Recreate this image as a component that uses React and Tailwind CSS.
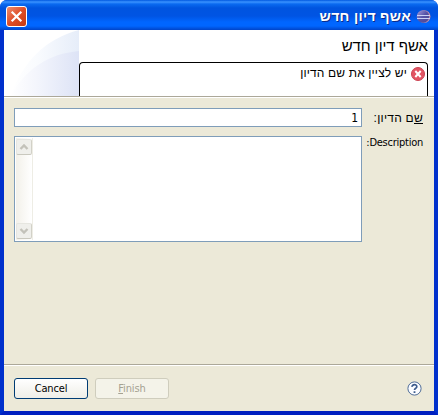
function GlobeIcon() {
  return (
    <svg className="h-[15px] w-[15px] shrink-0" viewBox="0 0 15 15">
      <defs>
        <linearGradient id="globe" x1="0" y1="0" x2="1" y2="1">
          <stop offset="0" stopColor="#a9a0e0" />
          <stop offset=".5" stopColor="#5552a6" />
          <stop offset="1" stopColor="#4d4794" />
        </linearGradient>
      </defs>
      <circle cx="8.2" cy="7.5" r="6.3" fill="#c98fa4" />
      <circle cx="7" cy="7.5" r="6.2" fill="url(#globe)" />
      <path d="M1 6.5H14M1 9.5H14" stroke="#ccd2f6" strokeWidth="1" />
    </svg>
  );
}

function CloseButton() {
  return (
    <button className="flex h-[21px] w-[21px] items-center justify-center rounded-[3px] border border-white bg-linear-to-br from-[#ee8c6c] via-[#de4d26] to-[#c63a10]">
      <svg className="h-[13px] w-[13px]" viewBox="0 0 13 13">
        <path d="M1.7 1.7L11.3 11.3M11.3 1.7L1.7 11.3" stroke="#fff" strokeWidth="2.2" />
      </svg>
    </button>
  );
}

function BannerArt() {
  return (
    <svg className="h-[66px] w-[75px] shrink-0" viewBox="0 0 75 66">
      <defs>
        <linearGradient id="outer" x1="0" x2="1">
          <stop offset="0" stopColor="#fff" />
          <stop offset=".4" stopColor="#f9fbfe" />
          <stop offset="1" stopColor="#e6edf9" />
        </linearGradient>
        <linearGradient id="inner" x1="0" x2="1">
          <stop offset="0" stopColor="#fff" />
          <stop offset=".4" stopColor="#f3f5fc" />
          <stop offset="1" stopColor="#dde3f6" />
        </linearGradient>
      </defs>
      <path d="M6 66C20 31 41 9 75 0V66Z" fill="url(#outer)" />
      <path d="M6 66C23 38 44 24 75 21V66Z" fill="url(#inner)" />
    </svg>
  );
}

function ErrorIcon() {
  return (
    <svg className="h-[14px] w-[14px] shrink-0" viewBox="0 0 14 14">
      <circle cx="7" cy="7" r="6.5" fill="#e25563" stroke="#cc4352" />
      <path d="M4.3 4L9.7 10M9.7 4L4.3 10" stroke="#fff" strokeWidth="2" />
    </svg>
  );
}

function ScrollButton({ down }) {
  return (
    <div className="flex h-[16px] w-[16px] items-center justify-center rounded-[2px] border border-[#e6e6e0] border-r-[#d2d1c8] border-b-[#c9c8be] bg-[#efefeb]">
      <svg className="h-[8px] w-[10px]" viewBox="0 0 10 8">
        <path d={down ? "M1.5 2L5 5.5L8.5 2" : "M1.5 6L5 2.5L8.5 6"} fill="none" stroke="#c3c2ba" strokeWidth="2.4" />
      </svg>
    </div>
  );
}

function HelpIcon() {
  return (
    <svg className="h-[15px] w-[15px]" viewBox="0 0 15 15">
      <circle cx="7.5" cy="7.5" r="6.6" fill="#fbfcff" stroke="#506d98" />
      <path d="M5.1 5.9C5 3 9.9 3 9.8 5.7C9.7 7.3 7.5 7.2 7.5 9" fill="none" stroke="#3d5c8d" strokeWidth="1.7" />
      <path d="M6.6 10.2H8.4V12H6.6Z" fill="#3d5c8d" />
    </svg>
  );
}

export default function App() {
  return (
    <div className="h-[415px] w-[439px] overflow-hidden bg-white font-['DejaVu_Sans_Condensed','DejaVu_Sans',sans-serif] text-[11px] text-black">
      <div className="flex h-[415px] w-[438px] flex-col overflow-hidden rounded-t-[7px] bg-[#0036d8]">
        <header className="flex h-[30px] shrink-0 items-center justify-between bg-[linear-gradient(180deg,#0058e0_0px,#3a93ff_2px,#0a6af0_4px,#0054df_8px,#0054e3_16px,#0066ff_22px,#0066ff_26px,#0044c8_30px)] pt-[2px] pr-[7px] pl-[6px]">
          <CloseButton />
          <div className="flex items-center gap-[5px]">
            <h1 dir="rtl" className="font-['Liberation_Sans',sans-serif] text-[14px] leading-[16px] font-bold tracking-[0.3px] whitespace-nowrap text-white [text-shadow:1px_1px_0_#0a2c8c]">אשף דיון חדש</h1>
            <GlobeIcon />
          </div>
        </header>
        <main className="flex min-h-0 grow flex-col border-x-4 border-b-4 border-r-[#0030cc] border-b-[#0020c0] border-l-[#0030cc] bg-[#ece9d8]">
          <section className="flex h-[66px] shrink-0 bg-white">
            <BannerArt />
            <div className="flex grow flex-col pr-[6px]">
              <h2 dir="rtl" className="h-[32px] pt-[7px] font-['Liberation_Sans',sans-serif] text-[15px] leading-[18px] tracking-[-0.05px] whitespace-nowrap">אשף דיון חדש</h2>
              <div dir="rtl" className="flex h-[34px] items-start gap-[4px] rounded-t-[4px] border border-b-0 border-black pt-[4px] pr-[2px]">
                <ErrorIcon />
                <p className="-mt-px font-['Liberation_Sans',sans-serif] text-[12px] leading-[14px] tracking-[0.15px] whitespace-nowrap">יש לציין את שם הדיון</p>
              </div>
            </div>
          </section>
          <div className="h-[2px] shrink-0 border-t border-b border-t-[#aca899] border-b-white" />
          <form className="grid grow grid-cols-[348px_1fr] content-start gap-x-[4px] gap-y-[9px] pt-[10px] pr-[11px] pl-[10px]">
            <div className="h-[19px] border border-[#7f9db9] bg-white pt-[2px] pr-[3px] text-right text-[12px] leading-[15px]">1</div>
            <label dir="rtl" className="pt-[3px] font-['Liberation_Sans',sans-serif] text-[12px] leading-[14px] tracking-[0.25px] whitespace-nowrap"><span className="underline">ש</span>ם הדיון:</label>
            <div className="h-[106px] border border-[#7f9db9] bg-white p-px">
              <div className="flex h-full w-[17px] flex-col justify-between border-r border-[#eeede5] bg-linear-to-r from-[#f3f1ea] to-white py-px">
                <ScrollButton />
                <ScrollButton down />
              </div>
            </div>
            <label dir="rtl" className="leading-[14px] tracking-[-0.25px] whitespace-nowrap">Description:</label>
          </form>
          <div className="h-[2px] shrink-0 border-t border-b border-t-[#aca899] border-b-white" />
          <footer className="flex h-[45px] shrink-0 items-start gap-[7px] px-[10px] pt-[12px]">
            <button className="h-[21px] w-[74px] rounded-[3px] border border-[#003c74] bg-linear-to-b from-white to-[#efeee7] leading-[20px] tracking-[-0.15px]">Cancel</button>
            <button className="h-[21px] w-[74px] rounded-[3px] border border-[#cfcdbd] bg-[#f4f3e9] leading-[20px] tracking-[-0.1px] text-[#a5a292]"><span className="underline">F</span>inish</button>
            <div className="mt-[3px] mr-[2px] ml-auto"><HelpIcon /></div>
          </footer>
        </main>
      </div>
    </div>
  );
}
